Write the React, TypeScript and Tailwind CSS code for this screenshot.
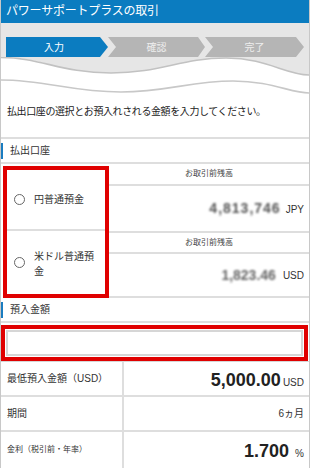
import React from "react";

const FONT = "[font-family:'Liberation_Sans','Noto_Sans_CJK_JP',sans-serif]";

function Radio() {
  return (
    <span className="block w-[11px] h-[11px] rounded-full border border-[#666] bg-white shrink-0" />
  );
}

function SectionHeader({ label }: { label: string }) {
  return (
    <div className="flex items-center h-[25px] border-b-2 border-[#dedede]">
      <span className="block w-[3px] h-[16px] bg-[#1a7cc0] -ml-px" />
      <span className="ml-[7px] text-[10px] text-[#333]">{label}</span>
    </div>
  );
}

export default function App() {
  return (
    <div
      className={`w-[310px] h-[468px] overflow-hidden bg-white border-x border-[#c8c8c8] ${FONT}`}
    >
      {/* Header */}
      <div className="h-[23px] bg-[#0b7cc0] text-white text-[12px] leading-[23px] pl-[5px] tracking-[-0.2px]">
        パワーサポートプラスの取引
      </div>

      {/* Steps */}
      <div className="bg-[#e6e6e6] pt-[14px]">
        <div className="flex pl-[5px]">
          <div className="w-[102px] h-[20px] bg-[#0b7cc0] text-white text-[10px] flex items-center justify-center pr-[6px] [clip-path:polygon(0_0,94px_0,102px_50%,94px_100%,0_100%)]">
            入力
          </div>
          <div className="w-[97px] h-[20px] bg-[#b5b5b5] text-[#eeeeee] text-[10px] flex items-center justify-center [clip-path:polygon(0_0,90px_0,97px_50%,90px_100%,0_100%,8px_50%)]">
            確認
          </div>
          <div className="w-[99px] h-[20px] bg-[#b5b5b5] text-[#eeeeee] text-[10px] flex items-center justify-center [clip-path:polygon(0_0,91px_0,99px_50%,91px_100%,0_100%,8px_50%)]">
            完了
          </div>
        </div>
      </div>

      {/* Wave */}
      <svg width="308" height="45" viewBox="0 0 308 45" className="block">
        <path
          d="M0,0 L308,0 L308,18 C285,18 265,1 225,1 C180,1 160,16 110,16 C60,16 40,0 0,0 Z"
          fill="#e6e6e6"
        />
        <path
          d="M0,0.5 C40,0.5 60,16 110,16 C160,16 180,1 225,1 C265,1 285,18 308,18"
          fill="none"
          stroke="#c2c2c2"
          strokeWidth="1.6"
        />
        <path
          d="M0,23 C45,23 70,35 120,35 C165,35 190,24 232,24 C270,24 290,36 308,36"
          fill="none"
          stroke="#c8c8c8"
          strokeWidth="1.6"
        />
      </svg>

      {/* Instruction */}
      <div className="h-[37px] pt-[3px] pl-[6px] text-[10px] leading-[14px] text-[#222] tracking-[-0.4px] border-b-2 border-[#dedede]">
        払出口座の選択とお預入れされる金額を入力してください。
      </div>

      <SectionHeader label="払出口座" />

      {/* Account table */}
      <div className="flex h-[134px]">
        <div className="ml-[2px] mt-[2px] w-[106px] h-[132px] border-4 border-[#e00000] flex flex-col">
          <div className="h-[61px] flex items-center pl-[7px] gap-[9px] text-[10px] text-[#333] border-b-2 border-[#dedede]">
            <Radio />
            <span>円普通預金</span>
          </div>
          <div className="flex-1 flex items-center pl-[7px] gap-[9px] text-[10px] leading-[15px] text-[#333]">
            <Radio />
            <span className="w-[62px] pt-[2px]">米ドル普通預金</span>
          </div>
        </div>
        <div className="flex-1 flex flex-col">
          <div className="h-[22px] flex items-center justify-center text-[8px] text-[#444] border-b-2 border-[#dedede]">
            お取引前残高
          </div>
          <div className="h-[47px] flex items-center justify-end pr-[5px] border-b-2 border-[#dedede]">
            <span className="text-[14px] font-bold text-[#555] blur-[1.3px] tracking-[1px]">
              4,813,746
            </span>
            <span className="ml-[5px] text-[10px] text-[#333] pt-[1px]">JPY</span>
          </div>
          <div className="h-[21px] flex items-center justify-center text-[8px] text-[#444] border-b-2 border-[#dedede]">
            お取引前残高
          </div>
          <div className="h-[44px] flex items-center justify-end pr-[5px] border-b-2 border-[#dedede]">
            <span className="text-[14px] font-bold text-[#666] blur-[1.3px]">
              1,823.46
            </span>
            <span className="ml-[7px] text-[10px] text-[#333] pt-[1px]">USD</span>
          </div>
        </div>
      </div>

      <SectionHeader label="預入金額" />

      {/* Input box */}
      <div className="mt-[2px] mr-[1px] h-[36px] border-4 border-[#e00000] p-[1px]">
        <div className="h-full border-2 border-[#d6d6d6] bg-white" />
      </div>

      {/* Summary table */}
      <div className="border-t border-[#d6d6d6] grid grid-cols-[123px_1fr] text-[#333]">
        <div className="h-[35px] flex items-center pl-[6px] text-[10px] border-b-2 border-r-2 border-[#dedede]">
          最低預入金額（USD）
        </div>
        <div className="h-[35px] flex items-baseline justify-end pr-[5px] pt-[9px] border-b-2 border-[#dedede]">
          <span className="text-[18px] font-bold leading-[18px] text-[#222]">5,000.00</span>
          <span className="ml-[2px] text-[10px]">USD</span>
        </div>
        <div className="h-[35px] flex items-center pl-[6px] text-[10px] border-b-2 border-r-2 border-[#dedede]">
          期間
        </div>
        <div className="h-[35px] flex items-center justify-end pr-[5px] text-[10px] border-b-2 border-[#dedede]">
          6ヵ月
        </div>
        <div className="h-[36px] flex items-center pl-[6px] text-[8px] border-r-2 border-[#dedede]">
          金利（税引前・年率）
        </div>
        <div className="h-[36px] flex items-baseline justify-end pr-[5px] pt-[10px]">
          <span className="text-[18px] font-bold leading-[18px] text-[#222]">1.700</span>
          <span className="ml-[6px] text-[10px]">%</span>
        </div>
      </div>
    </div>
  );
}
